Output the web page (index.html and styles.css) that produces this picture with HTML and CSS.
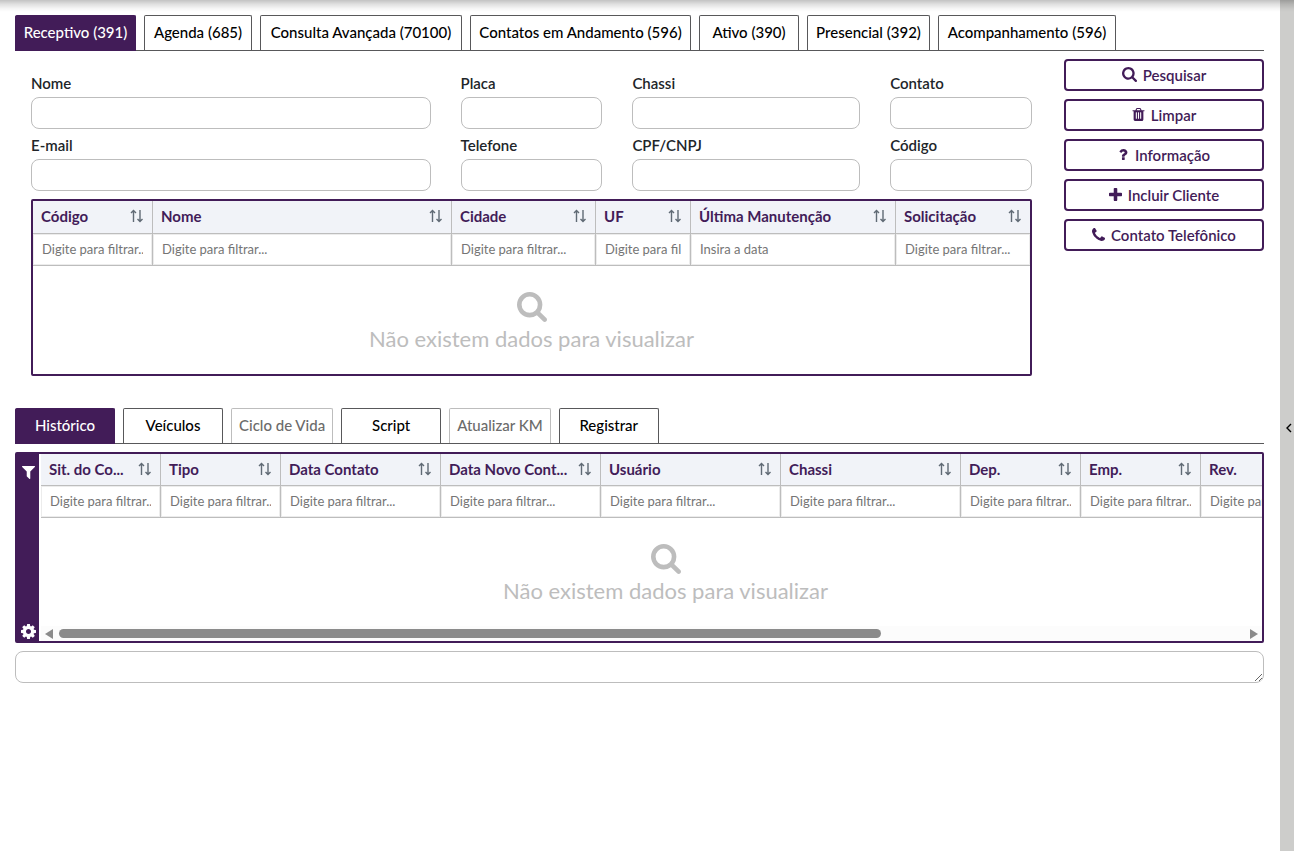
FILE: index.html
```html
<!DOCTYPE html>
<html lang="pt-BR">
<head>
<meta charset="utf-8">
<title>Contatos</title>
<link rel="stylesheet" href="styles.css">
</head>

<body>
<!-- icons used more than once or in the buttons -->
<svg class="defs" aria-hidden="true">
  <symbol id="i-search" viewBox="0 0 1664 1664"><path d="M1152 704q0-185-131.500-316.500T704 256 387.500 387.500 256 704t131.500 316.500T704 1152t316.500-131.500T1152 704zm512 832q0 52-38 90t-90 38q-54 0-90-38l-343-342q-179 124-399 124-143 0-273.500-55.500t-225-150-150-225T0 704t55.500-273.500 150-225 225-150T704 0t273.500 55.500 225 150 150 225T1408 704q0 220-124 399l343 343q37 37 37 90z"/></symbol>
  <symbol id="i-trash" viewBox="0 128 1408 1536"><path d="M512 1376V672q0-14-9-23t-23-9h-64q-14 0-23 9t-9 23v704q0 14 9 23t23 9h64q14 0 23-9t9-23zm256 0V672q0-14-9-23t-23-9h-64q-14 0-23 9t-9 23v704q0 14 9 23t23 9h64q14 0 23-9t9-23zm256 0V672q0-14-9-23t-23-9h-64q-14 0-23 9t-9 23v704q0 14 9 23t23 9h64q14 0 23-9t9-23zM480 384h448l-48-117q-7-9-17-11H546q-10 2-17 11zm928 32v64q0 14-9 23t-23 9h-96v948q0 83-47 143.500t-113 60.500H288q-66 0-113-58.500T128 1464V512H32q-14 0-23-9t-9-23v-64q0-14 9-23t23-9h309l70-167q15-37 54-63t79-26h320q40 0 79 26t54 63l70 167h309q14 0 23 9t9 23z"/></symbol>
  <symbol id="i-question" viewBox="64 128 1000 1284"><path d="M704 1128v240q0 16-12 28t-28 12H424q-16 0-28-12t-12-28v-240q0-16 12-28t28-12h240q16 0 28 12t12 28zm316-600q0 54-15.500 101t-35 76.500-55 59.500-57.500 43.500-61 35.500q-41 23-68.500 65T700 976q0 19-13 36.500t-31 17.500H416q-15 0-25.500-18.500T380 974v-45q0-83 65-156.500T588 664q59-27 84-56t25-76q0-42-46.500-74T543 426q-65 0-108 29-35 25-107 115-13 16-31 16-12 0-25-8L108 453q-13-10-15.500-25t5.500-28q160-266 464-266 80 0 161 31t146 83 106 127.500T1020 528z"/></symbol>
  <symbol id="i-plus" viewBox="0 0 1408 1408"><path d="M1408 608v192q0 40-28 68t-68 28H896v416q0 40-28 68t-68 28H608q-40 0-68-28t-28-68V896H96q-40 0-68-28T0 800V608q0-40 28-68t68-28h416V96q0-40 28-68t68-28h192q40 0 68 28t28 68v416h416q40 0 68 28t28 68z"/></symbol>
  <symbol id="i-phone" viewBox="0 0 1408 1408"><path d="M1408 1112q0 27-10 70.500t-21 68.500q-21 50-122 106-94 51-186 51-27 0-52.500-3.500T959 1392t-47.500-14.500-55.500-20.500-49-18q-98-35-175-83-128-79-264.500-215.500T152 776q-48-77-83-175-3-9-18-49t-20.500-55.500T16 449 3.500 391.500 0 339q0-92 51-186Q107 52 157 31q25-11 68.500-21T296 0q14 0 21 3 18 6 53 76 11 19 30 54t35 63.500 31 53.500q3 4 17.500 25t21.500 35.500 7 28.500q0 20-28.500 50t-62 55-62 53-28.500 46q0 9 5 22.500t8.500 20.500 14 24 11.500 19q76 137 174 235t235 174q2 1 19 11.500t24 14 20.500 8.500 22.500 5q18 0 46-28.500t53-62 55-62 50-28.500q14 0 28.500 7t35.500 21.500 25 17.500q25 15 53.500 31t63.500 35 54 30q70 35 76 53 3 7 3 21z"/></symbol>
  <symbol id="i-filter" viewBox="0 0 1408 1408"><path d="M1403 39q17 41-14 70L896 602v742q0 42-39 59-13 5-25 5-27 0-45-19l-256-256q-19-19-19-45V602L19 109q-31-29-14-70Q22 0 64 0h1280q42 0 59 39z"/></symbol>
  <symbol id="i-cog" viewBox="0 0 1536 1536"><path d="M1024 768q0-106-75-181t-181-75-181 75-75 181 75 181 181 75 181-75 75-181zm512-109v222q0 12-8 23t-20 13l-185 28q-19 54-39 91 35 50 107 138 10 12 10 25t-9 23q-27 37-99 108t-94 71q-12 0-26-9l-138-108q-44 23-91 38-16 136-29 186-7 28-36 28H657q-14 0-24.500-8.500T621 1506l-28-184q-49-16-90-37l-141 107q-10 9-25 9-14 0-25-11-126-114-165-168-7-10-7-23 0-12 8-23 15-21 51-66.500t54-70.500q-27-50-41-99L29 913q-13-2-21-12.500T0 877V655q0-12 8-23t19-13l186-28q14-46 39-92-40-57-107-138-10-12-10-24 0-10 9-23 26-36 98.500-107.500T337 135q13 0 26 10l138 107q44-23 91-38 16-136 29-186 7-28 36-28h222q14 0 24.500 8.500T915 30l28 184q49 16 90 37l142-107q9-9 24-9 13 0 25 10 129 119 165 170 7 8 7 22 0 12-8 23-15 21-51 66.500t-54 70.500q26 50 41 98l183 28q13 2 21 12.500t8 23.500z"/></symbol>
  <symbol id="i-sort" viewBox="0 0 14 14"><path d="M3.500 13V2M1 4l2.500-2.500L6 4M10 1v11M7.500 10l2.500 2.500 2.500-2.500" fill="none" stroke="currentColor" stroke-width="1.400"/></symbol>
</svg>

<div class="page">
<main class="content">

  <nav class="tabs tabs-main">
    <button class="tab active">Receptivo (391)</button>
    <button class="tab">Agenda (685)</button>
    <button class="tab">Consulta Avançada (70100)</button>
    <button class="tab">Contatos em Andamento (596)</button>
    <button class="tab">Ativo (390)</button>
    <button class="tab">Presencial (392)</button>
    <button class="tab">Acompanhamento (596)</button>
  </nav>

  <section class="search">
    <div class="search-main">
      <form class="fields">
        <div class="field"><label for="nome">Nome</label><input type="text" id="nome"></div>
        <div class="field"><label for="placa">Placa</label><input type="text" id="placa"></div>
        <div class="field"><label for="chassi">Chassi</label><input type="text" id="chassi"></div>
        <div class="field"><label for="contato">Contato</label><input type="text" id="contato"></div>
        <div class="field"><label for="email">E-mail</label><input type="text" id="email"></div>
        <div class="field"><label for="telefone">Telefone</label><input type="text" id="telefone"></div>
        <div class="field"><label for="cpf">CPF/CNPJ</label><input type="text" id="cpf"></div>
        <div class="field"><label for="codigo">Código</label><input type="text" id="codigo"></div>
      </form>

      <div class="grid">
        <table class="clientes">
          <colgroup><col class="w120"><col class="w299"><col class="w144"><col class="w95"><col class="w205"><col class="w134"></colgroup>
          <thead>
            <tr>
              <th><div class="th">Código<svg class="sort"><use href="#i-sort"/></svg></div></th>
              <th><div class="th">Nome<svg class="sort"><use href="#i-sort"/></svg></div></th>
              <th><div class="th">Cidade<svg class="sort"><use href="#i-sort"/></svg></div></th>
              <th><div class="th">UF<svg class="sort"><use href="#i-sort"/></svg></div></th>
              <th><div class="th">Última Manutenção<svg class="sort"><use href="#i-sort"/></svg></div></th>
              <th><div class="th">Solicitação<svg class="sort"><use href="#i-sort"/></svg></div></th>
            </tr>
            <tr>
              <td><input type="text" aria-label="Código" placeholder="Digite para filtrar..."></td>
              <td><input type="text" aria-label="Nome" placeholder="Digite para filtrar..."></td>
              <td><input type="text" aria-label="Cidade" placeholder="Digite para filtrar..."></td>
              <td><input type="text" aria-label="UF" placeholder="Digite para filtrar..."></td>
              <td><input type="text" aria-label="Última Manutenção" placeholder="Insira a data"></td>
              <td><input type="text" aria-label="Solicitação" placeholder="Digite para filtrar..."></td>
            </tr>
          </thead>
        </table>
        <div class="empty">
          <svg><use href="#i-search"/></svg>
          <p>Não existem dados para visualizar</p>
        </div>
      </div>
    </div>

    <div class="actions">
      <button class="action"><svg class="i15"><use href="#i-search"/></svg>Pesquisar</button>
      <button class="action"><svg class="i13"><use href="#i-trash"/></svg>Limpar</button>
      <button class="action"><svg class="i11"><use href="#i-question"/></svg>Informação</button>
      <button class="action"><svg class="i13"><use href="#i-plus"/></svg>Incluir Cliente</button>
      <button class="action"><svg class="i13"><use href="#i-phone"/></svg>Contato Telefônico</button>
    </div>
  </section>

  <nav class="tabs">
    <button class="tab active">Histórico</button>
    <button class="tab">Veículos</button>
    <button class="tab" disabled>Ciclo de Vida</button>
    <button class="tab">Script</button>
    <button class="tab" disabled>Atualizar KM</button>
    <button class="tab">Registrar</button>
  </nav>

  <div class="grid history">
    <div class="tools">
      <button aria-label="Filtrar"><svg class="i13"><use href="#i-filter"/></svg></button>
      <button aria-label="Configurar"><svg class="i15"><use href="#i-cog"/></svg></button>
    </div>
    <div class="history-main">
      <table class="contatos">
        <colgroup><col class="w120"><col class="w120"><col class="w160"><col class="w160"><col class="w180"><col class="w180"><col class="w120"><col class="w120"><col class="w120"></colgroup>
        <thead>
          <tr>
            <th><div class="th">Sit. do Co...<svg class="sort"><use href="#i-sort"/></svg></div></th>
            <th><div class="th">Tipo<svg class="sort"><use href="#i-sort"/></svg></div></th>
            <th><div class="th">Data Contato<svg class="sort"><use href="#i-sort"/></svg></div></th>
            <th><div class="th">Data Novo Cont...<svg class="sort"><use href="#i-sort"/></svg></div></th>
            <th><div class="th">Usuário<svg class="sort"><use href="#i-sort"/></svg></div></th>
            <th><div class="th">Chassi<svg class="sort"><use href="#i-sort"/></svg></div></th>
            <th><div class="th">Dep.<svg class="sort"><use href="#i-sort"/></svg></div></th>
            <th><div class="th">Emp.<svg class="sort"><use href="#i-sort"/></svg></div></th>
            <th><div class="th">Rev.<svg class="sort"><use href="#i-sort"/></svg></div></th>
          </tr>
          <tr>
            <td><input type="text" aria-label="Situação" placeholder="Digite para filtrar..."></td>
            <td><input type="text" aria-label="Tipo" placeholder="Digite para filtrar..."></td>
            <td><input type="text" aria-label="Data Contato" placeholder="Digite para filtrar..."></td>
            <td><input type="text" aria-label="Data Novo Contato" placeholder="Digite para filtrar..."></td>
            <td><input type="text" aria-label="Usuário" placeholder="Digite para filtrar..."></td>
            <td><input type="text" aria-label="Chassi" placeholder="Digite para filtrar..."></td>
            <td><input type="text" aria-label="Dep." placeholder="Digite para filtrar..."></td>
            <td><input type="text" aria-label="Emp." placeholder="Digite para filtrar..."></td>
            <td><input type="text" aria-label="Rev." placeholder="Digite para filtrar..."></td>
          </tr>
        </thead>
      </table>
      <div class="empty">
        <svg><use href="#i-search"/></svg>
        <p>Não existem dados para visualizar</p>
      </div>
      <div class="scrollbar">
        <svg viewBox="0 0 8 10"><path d="M8 0v10L0 5z"/></svg>
        <div class="track"><div class="thumb"></div></div>
        <svg viewBox="0 0 8 10"><path d="M0 0v10l8-5z"/></svg>
      </div>
    </div>
  </div>

  <textarea class="notes" aria-label="Observação"></textarea>
</main>

<button class="drawer" aria-label="Abrir painel"><svg viewBox="0 0 8 10"><path d="M6 1L2 5l4 4"/></svg></button>
</div>
</body>
</html>
```
FILE: styles.css
```css
* { box-sizing: border-box; }
body { margin: 0; background: #fff; color: #212529; font-family: Lato, sans-serif; font-size: 15px; }
button, input, textarea { font: inherit; margin: 0; }
svg { display: block; fill: currentColor; flex: none; }
.defs { position: absolute; width: 0; height: 0; }

.page { display: flex; min-height: 100vh; position: relative; }
/* shadow of the top bar */
.page::before { content: ""; position: absolute; top: 0; left: 0; right: 0; height: 12px;
  background: linear-gradient(rgba(0,0,0,.24), rgba(0,0,0,.12) 35%, rgba(0,0,0,.03) 75%, transparent); }
.content { flex: 1; min-width: 0; padding: 15px 16px 0 15px; }

.tabs { display: flex; gap: 8px; border-bottom: 1px solid #58585a; }
.tabs-main { display: grid; grid-template-columns: 121px 108px 202px 221px 100px 123px 178px; }
.tab { height: 35px; min-width: 100px; padding: 0 7px 2px; background: #fff; color: #000; font-weight: 500;
  border: 1px solid #58585a; border-bottom: none; border-radius: 2px 2px 0 0; white-space: nowrap; }
.tab.active { background: #421c58; border-color: #421c58; color: #fff; box-shadow: 0 1px #421c58; }
.tab:disabled { color: #6b6b6b; border-color: #bdbdbd; }

.search { display: flex; gap: 32px; padding: 8px 0 32px 16px; }
.search-main { flex: 1; min-width: 0; padding-top: 16px; }
.fields { display: grid; grid-template-columns: 400fr 142fr 228fr 142fr; gap: 8px 30px; margin-bottom: 8px; }
.field { min-width: 0; }
.field label { display: block; height: 22px; line-height: 16px; font-weight: 600; }
.field input { display: block; width: 100%; height: 32px; padding: 0 8px; border: 1px solid #bdbdbd; border-radius: 8px; }

.actions { width: 200px; display: flex; flex-direction: column; gap: 8px; }
.action { display: flex; align-items: center; justify-content: center; gap: 6px; height: 32px; padding: 0 8px;
  line-height: 20px; padding-bottom: 1px;
  background: #fff; color: #421c58; font-weight: 600; border: 2px solid #421c58; border-radius: 4px; }
.i15 { width: 15px; height: 15px; }
.i13 { width: 13px; height: 13px; }
.i11 { width: 11px; height: 11px; }

.grid { border: 2px solid #421c58; border-radius: 2px; overflow: hidden; }
table { width: 100%; table-layout: fixed; border-collapse: separate; border-spacing: 0; }
th, td { padding: 0; border-right: 1px solid #bdbdbd; border-bottom: 1px solid #bdbdbd; }
th:last-child, td:last-child { border-right: none; }
th { background: #f1f3f8; color: #421c58; font-weight: 700; text-align: left; }
.th { display: flex; align-items: center; justify-content: space-between; height: 32px; padding: 0 8px 2px;
  line-height: 20px; white-space: nowrap; }
.sort { width: 14px; height: 14px; color: #606a75; }
td input { display: block; width: 100%; height: 31px; padding: 0 8px 2px; border: 1px solid #ececec; font-size: 13px; background: #fff; }
td input::placeholder { color: #757575; opacity: 1; }
.contatos .th { height: 31px; }
.contatos { width: 1280px; }

.w95 { width: 95px; }
.w120 { width: 120px; }
.w134 { width: 134px; }
.w144 { width: 144px; }
.w160 { width: 160px; }
.w180 { width: 180px; }
.w205 { width: 205px; }
.w299 { width: 299px; }

.empty { display: flex; flex-direction: column; align-items: center; height: 108px; padding-top: 26px; color: #bdbdbd; }
.empty svg { width: 30px; height: 30px; }
.empty p { margin: 4px 0 0; font-size: 22px; line-height: 26px; }

.history { display: flex; margin: 8px 0; }
.tools { width: 22px; padding: 12px 0 2px; display: flex; flex-direction: column; justify-content: space-between; background: #421c58; }
.tools button { display: flex; justify-content: center; padding: 0; border: none; background: none; color: #fff; }
.history-main { flex: 1; min-width: 0; overflow: hidden; padding-left: 2px; }
.history .empty { padding-left: 28px; }
.scrollbar { display: flex; align-items: center; gap: 6px; height: 15px; padding: 0 4px; background: #fcfcfc; color: #8b8b8b; }
.scrollbar svg { width: 8px; height: 10px; }
.track { flex: 1; }
.thumb { width: 69.4%; height: 9px; border-radius: 5px; background: #8b8b8b; }

.notes { display: block; width: 100%; height: 32px; padding: 4px 8px; border: 1px solid #bdbdbd; border-radius: 8px; resize: both; }

.drawer { display: flex; align-items: center; justify-content: center; width: 14px; padding: 4px 0 0 3px; border: none; background: #cdcdcb; }
.drawer svg { width: 8px; height: 10px; fill: none; stroke: #000; stroke-width: 1.400; }
```
